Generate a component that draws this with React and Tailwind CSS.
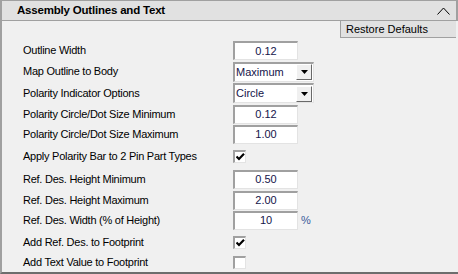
import React from 'react'

const sunken = 'border-t-2 border-l-2 border-t-[#a0a0a0] border-l-[#a0a0a0] border-b border-r border-b-[#e3e3e3] border-r-[#e3e3e3] bg-white'

function NumBox({ value }) {
  return (
    <div className={`${sunken} w-[65px] h-[19px] flex items-center justify-center text-[#14144a] leading-none`}>
      {value}
    </div>
  )
}

function Select({ value }) {
  return (
    <div className={`${sunken} w-[81px] h-[20px] flex items-center`}>
      <span className="flex-1 pl-[1px] text-[#14144a] leading-none">{value}</span>
      {/* dropdown button */}
      <div className="w-[16px] h-[16px] mr-[1px] bg-[#f0f0f0] border border-t-white border-l-white border-r-[#696969] border-b-[#696969] flex items-center justify-center">
        <svg width="7" height="4" viewBox="0 0 7 4">
          <path d="M0 0h7L3.5 4z" fill="#000" />
        </svg>
      </div>
    </div>
  )
}

function Check({ checked }) {
  return (
    <div className={`${sunken} w-[13px] h-[13px] flex items-center justify-center`}>
      {checked && (
        <svg width="9" height="8" viewBox="0 0 9 8">
          <path d="M0.5 3.5 L3 6 L8 0.8" stroke="#000" strokeWidth="2.2" fill="none" />
        </svg>
      )}
    </div>
  )
}

function Row({ label, h, children }) {
  return (
    <div className={`flex items-center ${h}`}>
      <div className="w-[231px] pl-[21px] text-black whitespace-nowrap tracking-[-0.25px]">{label}</div>
      <div className="flex items-center gap-[3px]">{children}</div>
    </div>
  )
}

export default function App() {
  return (
    <div
      className="w-[458px] h-[274px] bg-[#f0f0f0] border-l-2 border-l-[#a0a0a0] border-b-2 border-b-[#6d6d6d] flex flex-col text-[11px] overflow-hidden"
      style={{ fontFamily: '"Liberation Sans", Arial, sans-serif' }}
    >
      {/* header */}
      <div className="h-[21px] shrink-0 bg-[#e1e1e1] border-t border-b border-r-2 border-[#a0a0a0] flex items-center justify-between pl-[15px] pr-[6px]">
        <span className="font-bold text-[11.5px] text-black tracking-[-0.2px]">Assembly Outlines and Text</span>
        <svg width="13" height="8" viewBox="0 0 13 8">
          <path d="M0.5 7.5 L6.5 1 L12.5 7.5" stroke="#000" strokeWidth="1" fill="none" />
        </svg>
      </div>

      <div className="flex justify-end pr-[2px] shrink-0">
        <button className="w-[116px] h-[17px] bg-[#e1e1e1] border-l border-b border-[#a0a0a0] text-left pl-[5px] leading-none text-black">
          Restore Defaults
        </button>
      </div>

      <div className="h-[2px] shrink-0" />

      <Row label="Outline Width" h="h-[21px]"><NumBox value="0.12" /></Row>
      <Row label="Map Outline to Body" h="h-[21px]"><Select value="Maximum" /></Row>
      <Row label="Polarity Indicator Options" h="h-[22px]"><Select value="Circle" /></Row>
      <Row label="Polarity Circle/Dot Size Minimum" h="h-[20px]"><NumBox value="0.12" /></Row>
      <Row label="Polarity Circle/Dot Size Maximum" h="h-[20px]"><NumBox value="1.00" /></Row>
      <Row label="Apply Polarity Bar to 2 Pin Part Types" h="h-[24px]"><Check checked /></Row>
      <Row label="Ref. Des. Height Minimum" h="h-[22px]"><NumBox value="0.50" /></Row>
      <Row label="Ref. Des. Height Maximum" h="h-[20px]"><NumBox value="2.00" /></Row>
      <Row label="Ref. Des. Width (% of Height)" h="h-[20px]">
        <NumBox value="10" />
        <span className="text-[#3a5a9a]">%</span>
      </Row>
      <Row label="Add Ref. Des. to Footprint" h="h-[24px]"><Check checked /></Row>
      <Row label="Add Text Value to Footprint" h="h-[17px]"><Check /></Row>
    </div>
  )
}
